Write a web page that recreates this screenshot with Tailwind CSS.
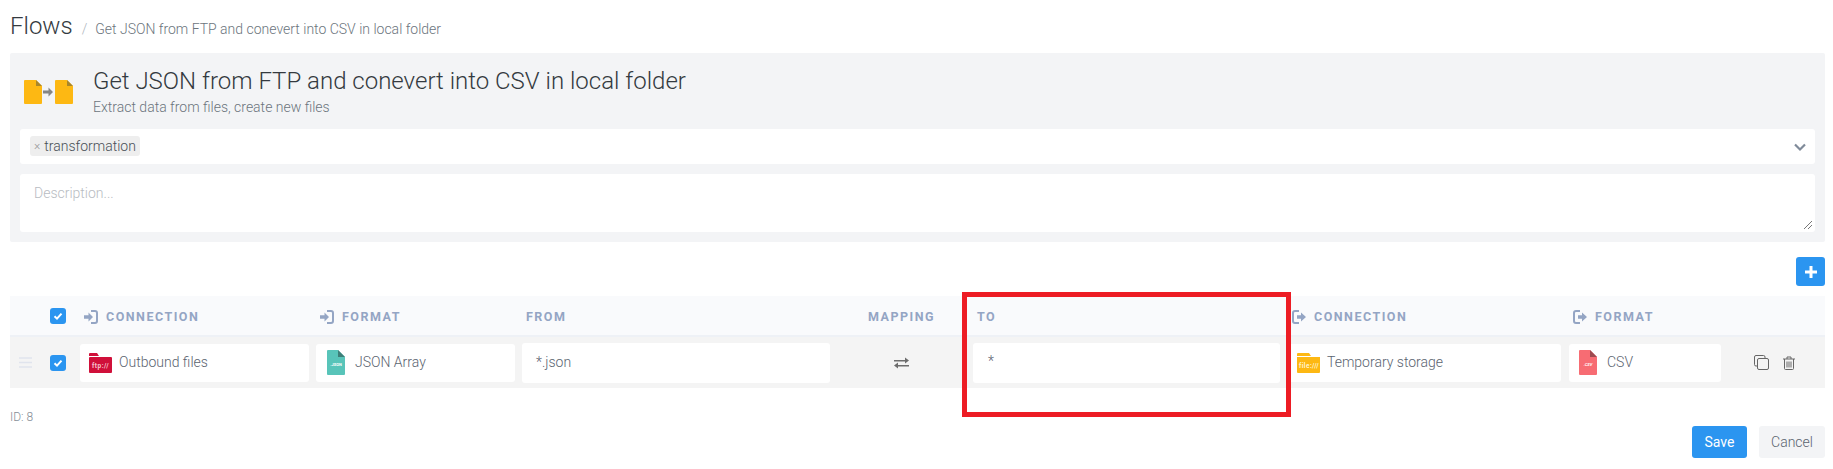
<!DOCTYPE html>
<html>
<head>
<meta charset="utf-8">
<script src="https://cdn.jsdelivr.net/npm/@tailwindcss/browser@4"></script>
</head>
<body class="bg-white font-['Roboto',sans-serif] font-light text-[#495057] overflow-hidden">
<div class="relative w-[1833px] h-[469px] px-[10px]">
  <div class="flex items-baseline h-[53px] pt-[9px]">
    <span class="text-[24px] leading-[34px] text-[#343a40]">Flows</span>
    <span class="text-[14px] text-[#adb5bd] ml-[9px]">/</span>
    <span class="text-[14px] text-[#6c757d] ml-[8px]">Get JSON from FTP and conevert into CSV in local folder</span>
  </div>

  <div class="w-[1815px] h-[189px] bg-[#f3f4f6] rounded-[2px] px-[10px] flex flex-col">
    <div class="flex h-[76px] items-center pl-[4px]">
      <svg class="w-[50px] h-[28px] mr-[19px]" viewBox="0 0 50 28">
        <path d="M1 3h11l6 6v17a1 1 0 0 1-1 1H1a1 1 0 0 1-1-1V4a1 1 0 0 1 1-1z" fill="#fdb813"/>
        <path d="M12 3l6 6h-6z" fill="#a8862c"/>
        <path d="M32 3h11l6 6v17a1 1 0 0 1-1 1H32a1 1 0 0 1-1-1V4a1 1 0 0 1 1-1z" fill="#fdb813"/>
        <path d="M43 3l6 6h-6z" fill="#a8862c"/>
        <path d="M19 13.500h5.500v-3l4.500 4.500-4.500 4.500v-3H19z" fill="#868686"/>
      </svg>
      <div class="flex flex-col">
        <span class="text-[24px] leading-[28px] text-[#343a40]">Get JSON from FTP and conevert into CSV in local folder</span>
        <span class="text-[14px] leading-[18px] text-[#6c757d] mt-[3px]">Extract data from files, create new files</span>
      </div>
    </div>
    <div class="h-[35px] bg-white rounded-[3px] flex items-center justify-between pl-[10px] pr-[8px]">
      <span class="flex items-center h-[20px] -mt-[1px] px-[4px] bg-[#eeeeee] rounded-[3px] text-[14px] text-[#495057]"><span class="text-[#999] text-[12px] mr-[4px]">×</span>transformation</span>
      <svg class="w-[14px] h-[10px]" viewBox="0 0 14 10"><path d="M2 2.500l5 5 5-5" fill="none" stroke="#7f8a99" stroke-width="2.200"/></svg>
    </div>
    <div class="relative h-[58px] bg-white rounded-[3px] mt-[10px] pl-[14px] pt-[9px] text-[14px] text-[#b8bcc2]">
      Description...
      <svg class="absolute right-[2px] bottom-[2px] w-[10px] h-[10px]" viewBox="0 0 10 10"><path d="M1 9l8-8M5 9l4-4" stroke="#777" stroke-width="1"/></svg>
    </div>
  </div>

  <div class="flex justify-end w-[1815px] mt-[15px] h-[29px]">
    <div class="w-[29px] h-[29px] bg-[#2b95f0] rounded-[3px] flex items-center justify-center">
      <svg class="w-[12px] h-[12px]" viewBox="0 0 12 12"><path d="M4.500 0h3v4.500H12v3H7.500V12h-3V7.500H0v-3h4.500z" fill="#fff"/></svg>
    </div>
  </div>

  <div class="w-[1815px] mt-[10px] grid grid-cols-[70px_236px_206px_308px_143px_315px_281px_152px_104px]">
    <div class="col-span-9 grid grid-cols-subgrid h-[41px] bg-[#f9fafc] border-b-2 border-[#eef1f6] text-[12.5px] font-bold tracking-[1.5px] text-[#94a5c4] items-center">
      <div class="flex justify-end pr-[14px]">
        <span class="w-[16px] h-[16px] rounded-[3px] bg-[#2b95f0] flex items-center justify-center"><svg class="w-[10px] h-[10px]" viewBox="0 0 10 10"><path d="M1.500 5.200l2.500 2.400 4.500-5" fill="none" stroke="#fff" stroke-width="2"/></svg></span>
      </div>
      <div class="flex items-center pl-[4px] pt-[3px]"><svg class="w-[14px] h-[14px] mr-[8px]" viewBox="0 0 14 14"><path d="M0 5.200h4.500V2.500L9 7l-4.500 4.500V8.800H0z" fill="#94a5c4"/><path d="M7 1h4a2 2 0 0 1 2 2v8a2 2 0 0 1-2 2H7" fill="none" stroke="#94a5c4" stroke-width="2"/></svg>CONNECTION</div>
      <div class="flex items-center pl-[4px] pt-[3px]"><svg class="w-[14px] h-[14px] mr-[8px]" viewBox="0 0 14 14"><path d="M0 5.200h4.500V2.500L9 7l-4.500 4.500V8.800H0z" fill="#94a5c4"/><path d="M7 1h4a2 2 0 0 1 2 2v8a2 2 0 0 1-2 2H7" fill="none" stroke="#94a5c4" stroke-width="2"/></svg>FORMAT</div>
      <div class="pl-[4px] pt-[3px]">FROM</div>
      <div class="text-center pt-[3px]">MAPPING</div>
      <div class="pl-[4px] pt-[3px]">TO</div>
      <div class="flex items-center pl-[4px] pt-[3px]"><svg class="w-[14px] h-[14px] mr-[8px]" viewBox="0 0 14 14"><path d="M7 1H3a2 2 0 0 0-2 2v8a2 2 0 0 0 2 2h4" fill="none" stroke="#94a5c4" stroke-width="2"/><path d="M5 5.200h4V2.500L14 7l-5 4.500V8.800H5z" fill="#94a5c4"/></svg>CONNECTION</div>
      <div class="flex items-center pl-[4px] pt-[3px]"><svg class="w-[14px] h-[14px] mr-[8px]" viewBox="0 0 14 14"><path d="M7 1H3a2 2 0 0 0-2 2v8a2 2 0 0 0 2 2h4" fill="none" stroke="#94a5c4" stroke-width="2"/><path d="M5 5.200h4V2.500L14 7l-5 4.500V8.800H5z" fill="#94a5c4"/></svg>FORMAT</div>
      <div></div>
    </div>

    <div class="col-span-9 grid grid-cols-subgrid h-[51px] bg-[#f4f4f4] items-center text-[14px] text-[#5b6470]">
      <div class="flex items-center justify-between pl-[9px] pr-[14px]">
        <svg class="w-[13px] h-[11px]" viewBox="0 0 13 11"><path d="M0 1h13M0 5.500h13M0 10h13" stroke="#e0e4ed" stroke-width="1.600"/></svg>
        <span class="w-[16px] h-[16px] rounded-[3px] bg-[#2b95f0] flex items-center justify-center"><svg class="w-[10px] h-[10px]" viewBox="0 0 10 10"><path d="M1.500 5.200l2.500 2.400 4.500-5" fill="none" stroke="#fff" stroke-width="2"/></svg></span>
      </div>
      <div class="h-[38px] bg-white rounded-[3px] mr-[7px] flex items-center pl-[9px]">
        <svg class="w-[23px] h-[21px] mr-[7px]" viewBox="0 0 23 21"><path d="M0 2a1 1 0 0 1 1-1h7l2 3H0z" fill="#d0103a"/><path d="M1 5h21a1 1 0 0 1 1 1v14a1 1 0 0 1-1 1H1a1 1 0 0 1-1-1V6a1 1 0 0 1 1-1z" fill="#d0103a"/><text x="3" y="16" font-size="6.500" font-weight="700" letter-spacing=".5" fill="#f6c5d0" font-family="Roboto">ftp://</text></svg>
        Outbound files
      </div>
      <div class="h-[38px] bg-white rounded-[3px] mr-[7px] flex items-center pl-[11px]">
        <svg class="w-[18px] h-[25px] mr-[10px]" viewBox="0 0 18 25"><path d="M1 0h10l7 7v17a1 1 0 0 1-1 1H1a1 1 0 0 1-1-1V1a1 1 0 0 1 1-1z" fill="#58c4b9"/><path d="M11 0l7 7h-7z" fill="#3e7f78"/><text x="9" y="15.500" text-anchor="middle" font-size="4" font-weight="700" fill="#fff" font-family="Roboto">.JSON</text></svg>
        JSON Array
      </div>
      <div class="h-[40px] bg-white rounded-[3px] flex items-center pl-[14px]">*.json</div>
      <div class="flex justify-center">
        <svg class="w-[15px] h-[12px]" viewBox="0 0 15 12"><path d="M0 3h11V.500L15 3.500 11 6.500V4.500H0zM15 8H4V5.500L0 8.500 4 11.500V9.500h11z" fill="#6d6d6d"/></svg>
      </div>
      <div class="h-[40px] bg-white rounded-[3px] mr-[8px] flex items-center pl-[15px]"><span class="-mt-[2px]">*</span></div>
      <div class="h-[38px] bg-white rounded-[3px] mr-[8px] flex items-center pl-[9px]">
        <svg class="w-[23px] h-[21px] mr-[7px]" viewBox="0 0 23 21"><path d="M0 2a1 1 0 0 1 1-1h11l2 3H0z" fill="#fdb813"/><path d="M0 5h23v15a1 1 0 0 1-1 1H1a1 1 0 0 1-1-1z" fill="#fdb813"/><text x="2" y="16" font-size="6.500" font-weight="700" letter-spacing=".4" fill="#fff3cd" font-family="Roboto">file:///</text></svg>
        Temporary storage
      </div>
      <div class="h-[38px] bg-white rounded-[3px] flex items-center pl-[10px]">
        <svg class="w-[18px] h-[25px] mr-[10px]" viewBox="0 0 18 25"><path d="M1 0h10l7 7v17a1 1 0 0 1-1 1H1a1 1 0 0 1-1-1V1a1 1 0 0 1 1-1z" fill="#f76c73"/><path d="M11 0l7 7h-7z" fill="#9e4a50"/><text x="9" y="15.500" text-anchor="middle" font-size="4" font-weight="700" font-style="italic" fill="#fff" font-family="Roboto">.CSV</text></svg>
        CSV
      </div>
      <div class="flex items-center justify-end pr-[30px] gap-[14px]">
        <svg class="w-[15px] h-[15px]" viewBox="0 0 15 15" fill="none" stroke="#666" stroke-width="1"><path d="M11 3V2a1.500 1.500 0 0 0-1.500-1.500H2A1.500 1.500 0 0 0 .5 2v7.500A1.500 1.500 0 0 0 2 11h1"/><rect x="3.500" y="3.500" width="11" height="11" rx="1.500"/></svg>
        <svg class="w-[12px] h-[14px]" viewBox="0 0 12 14" fill="none" stroke="#666" stroke-width="1"><path d="M0 3h12M4 3V1h4v2M1.500 3v9.500a1 1 0 0 0 1 1h7a1 1 0 0 0 1-1V3M4 5.500v6M6 5.500v6M8 5.500v6"/></svg>
      </div>
    </div>
  </div>

  <div class="w-[1815px] text-[12px] text-[#868e96] mt-[22px] leading-[14px]">ID: 8</div>
  <div class="w-[1815px] flex justify-end gap-[12px] mt-[2px] text-[14px]">
    <span class="w-[55px] h-[32px] bg-[#2b95f0] text-white rounded-[3px] flex items-center justify-center font-normal">Save</span>
    <span class="w-[66px] h-[32px] bg-[#f3f4f6] text-[#5b6470] rounded-[3px] flex items-center justify-center">Cancel</span>
  </div>

  <div class="absolute left-[962px] top-[292px] w-[329px] h-[125px] border-[5px] border-[#ed1c24]"></div>
</div>
</body>
</html>
